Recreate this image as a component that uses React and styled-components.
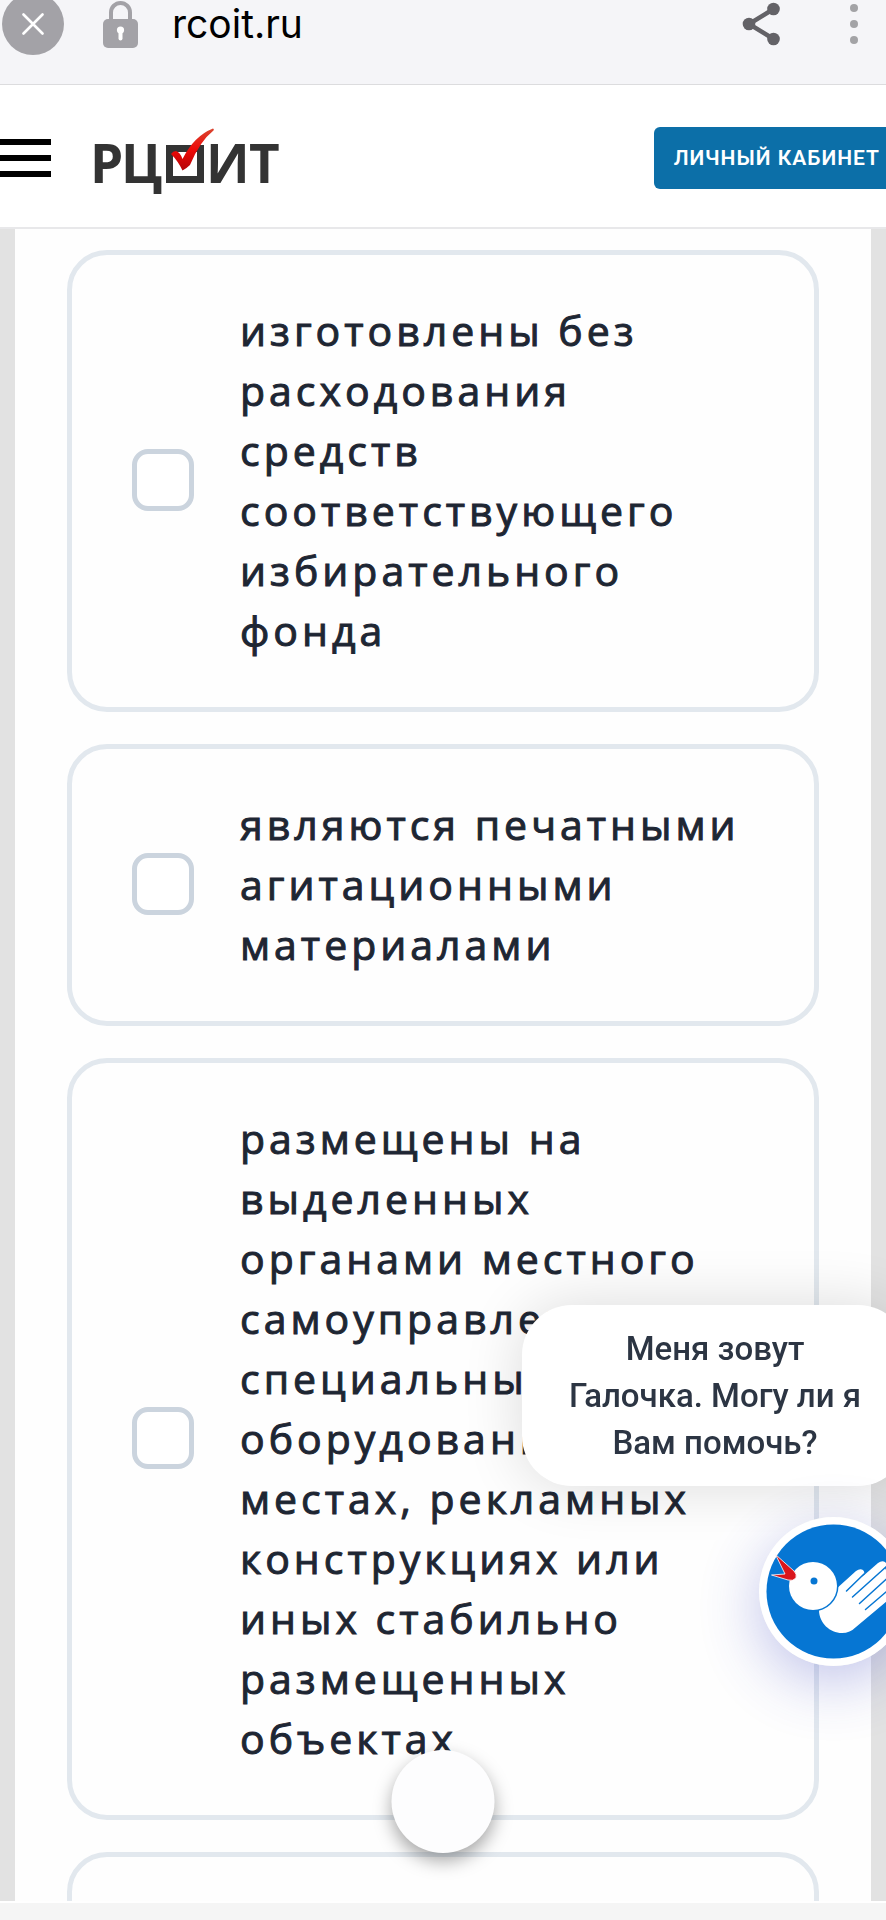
import styled, { createGlobalStyle } from 'styled-components';

const options = [
  'изготовлены без расходования средств соответствующего избирательного фонда',
  'являются печатными агитационными материалами',
  'размещены на выделенных органами местного самоуправления специальных оборудованных местах, рекламных конструкциях или иных стабильно размещенных объектах',
  '',
];

export default function App() {
  return (
    <Page>
      <GlobalStyle />
      <BrowserBar />
      <SiteHeader />
      <Scroller>
        <Panel>
          {options.map((text, idx) => (
            <Option key={idx} text={text} />
          ))}
        </Panel>
      </Scroller>
      <SystemBar />
      <RoundButton type="button" aria-label="Прокрутить" />
      <Assistant>
        <Bubble>Меня зовут Галочка. Могу ли я Вам помочь?</Bubble>
        <BirdButton type="button" aria-label="Галочка">
          <BirdIcon />
        </BirdButton>
      </Assistant>
    </Page>
  );
}

function BrowserBar() {
  return (
    <TopBar>
      <CloseButton type="button" aria-label="Закрыть">
        <svg width="22" height="22" viewBox="0 0 22 22" fill="none" stroke="#fff" strokeWidth="2.6" strokeLinecap="round">
          <path d="M1.5 1.5l19 19M20.5 1.5l-19 19" />
        </svg>
      </CloseButton>
      <svg width="35" height="48" viewBox="0 0 35 48">
        <path d="M8 20V12.500a9.500 9.500 0 0 1 19 0V20" fill="none" stroke="#a3a2a7" strokeWidth="4" />
        <rect y="19" width="35" height="29" rx="5" fill="#a3a2a7" />
        <circle cx="17.500" cy="30" r="3.600" fill="#fff" />
        <path d="M17.500 31v7.500" stroke="#fff" strokeWidth="4" strokeLinecap="round" />
      </svg>
      <Address type="text" aria-label="Адрес" defaultValue="rcoit.ru" />
      <IconButton type="button" aria-label="Поделиться">
        <svg width="38" height="44" viewBox="0 0 38 44" fill="#636267">
          <path d="M31.500 7L7 22l24.500 15" fill="none" stroke="#636267" strokeWidth="4.500" />
          <circle cx="31.500" cy="7" r="6.300" />
          <circle cx="7" cy="22" r="6.300" />
          <circle cx="31.500" cy="37" r="6.300" />
        </svg>
      </IconButton>
      <IconButton type="button" aria-label="Меню браузера">
        <svg width="10" height="44" viewBox="0 0 10 44" fill="#a3a3a6">
          <circle cx="5" cy="6" r="4" />
          <circle cx="5" cy="22" r="4" />
          <circle cx="5" cy="38" r="4" />
        </svg>
      </IconButton>
    </TopBar>
  );
}

function SiteHeader() {
  return (
    <Header>
      <Burger type="button" aria-label="Меню">
        <span />
        <span />
        <span />
      </Burger>
      <Logo href="#" aria-label="РЦОИТ">
        <svg width="196" height="82" viewBox="-6 -6 196 82">
          <defs>
            <linearGradient id="tick" x1="0" y1="0" x2="0" y2="1">
              <stop offset="0" stopColor="#d9452f" />
              <stop offset="0.500" stopColor="#ee0a08" />
              <stop offset="1" stopColor="#b30306" />
            </linearGradient>
          </defs>
          <g fill="#333" fontFamily="'Open Sans', 'Noto Sans', sans-serif" fontSize="53" fontWeight="700">
            <text x="-4" y="60">Р</text>
            <text x="27" y="60">Ц</text>
            <text x="112" y="60">И</text>
            <text x="155" y="60">Т</text>
          </g>
          <rect x="75.500" y="25.500" width="31" height="31" fill="none" stroke="#333" strokeWidth="7" />
          <path
            d="M77 31Q79 28 82 28Q86 29 88.500 36Q100 13 119 5.500Q120.500 6 119.500 7.500Q106 18 96 42Q93 45 88.500 47.500Q84 38 77 31Z"
            fill="url(#tick)"
          />
        </svg>
      </Logo>
      <CabinetButton type="button">Личный кабинет</CabinetButton>
    </Header>
  );
}

function Option({ text }) {
  return (
    <Card>
      <Checkbox type="checkbox" aria-label={text ? undefined : 'Вариант'} />
      <span>{text}</span>
    </Card>
  );
}

function BirdIcon() {
  return (
    <svg width="149" height="149" viewBox="0 0 149 149">
      <circle cx="74.500" cy="74.500" r="74.500" fill="#fff" />
      <circle cx="74.500" cy="74.500" r="67" fill="#0676d3" />
      {/* wing in the shape of a hand */}
      <path
        d="M60 93C60 106 71 116 83 116Q91 116 97 110L134 79V48L127 53L126 51Q129 47 126 45Q123 43 119 46L103 60Q107 56 104 53Q101 51 97 54L76 73Z"
        fill="#fff"
      />
      <path
        d="M87.500 74L105 57M93.500 80L128 49M100.500 86.500L134 56M106.500 92.500L134 69"
        stroke="#0676d3"
        strokeWidth="1.500"
        strokeLinecap="round"
      />
      <circle cx="54" cy="69" r="25.500" fill="#0676d3" />
      <circle cx="54" cy="69" r="24" fill="#fff" />
      <circle cx="55" cy="64" r="3.500" fill="#0676d3" />
      <path
        d="M16.500 37.500L35 54Q38 57 37 61Q34 64.500 29 63L12.500 58L26 57Z"
        fill="#d9151c"
        stroke="#fff"
        strokeWidth="0.800"
      />
    </svg>
  );
}

const GlobalStyle = createGlobalStyle`
  * {
    box-sizing: border-box;
  }

  body {
    margin: 0;
    background: #fff;
    font-family: Roboto, "Noto Sans", sans-serif;
  }

  button {
    border: 0;
    padding: 0;
    font: inherit;
    cursor: pointer;
  }

  svg {
    display: block;
    flex-shrink: 0;
  }
`;

const Page = styled.div`
  position: relative;
  display: flex;
  flex-direction: column;
  height: 100vh;
  overflow: hidden;
`;

const TopBar = styled.div`
  display: flex;
  align-items: center;
  flex-shrink: 0;
  height: 85px;
  padding: 0 27px 37px 2px;
  background: #f5f5f8;
  border-bottom: 1px solid #dcdcde;
`;

const CloseButton = styled.button`
  display: flex;
  align-items: center;
  justify-content: center;
  flex-shrink: 0;
  width: 62px;
  height: 62px;
  margin-right: 39px;
  border-radius: 50%;
  background: #a3a2a7;
`;

const Address = styled.input`
  flex: 1;
  min-width: 0;
  margin-left: 34px;
  padding: 0;
  border: 0;
  outline: none;
  background: transparent;
  color: #000;
  font-family: Inter, sans-serif;
  font-size: 39px;
  line-height: 48px;
`;

const IconButton = styled.button`
  margin-left: 69px;
  background: transparent;
`;

const Header = styled.header`
  display: flex;
  align-items: center;
  flex-shrink: 0;
  height: 144px;
  margin-right: -14px;
  padding-top: 3px;
  background: #fff;
  border-bottom: 2px solid #e8e8ea;
`;

const Burger = styled.button`
  display: flex;
  flex-direction: column;
  gap: 10px;
  width: 51px;
  margin-right: 37px;
  background: transparent;

  span {
    height: 6px;
    background: #000;
  }
`;

const Logo = styled.a`
  margin-right: auto;
`;

const CabinetButton = styled.button`
  height: 62px;
  padding: 0 20px;
  border-radius: 6px;
  background: #0c6fa8;
  color: #fff;
  font-size: 21px;
  font-weight: 600;
  letter-spacing: 1px;
  text-transform: uppercase;
  white-space: nowrap;
`;

const Scroller = styled.main`
  flex: 1;
  min-height: 0;
  padding: 0 15px;
  overflow-y: auto;
  scrollbar-width: none;
  background: #e2e2e2;
`;

const Panel = styled.div`
  display: flex;
  flex-direction: column;
  gap: 32px;
  padding: 21px 52px;
  background: #fefefe;
`;

const Card = styled.label`
  display: flex;
  align-items: center;
  gap: 46px;
  min-height: 162px;
  padding: 45px 60px 47px;
  border: 5px solid #e2e8ee;
  border-radius: 40px;
  color: #1e2633;
  font-family: "Open Sans", "Noto Sans", sans-serif;
  font-size: 41px;
  font-weight: 500;
  line-height: 60px;
  letter-spacing: 4px;
  -webkit-text-stroke: 1px currentColor;
`;

const Checkbox = styled.input`
  appearance: none;
  flex-shrink: 0;
  width: 62px;
  height: 62px;
  margin: 0;
  border: 5px solid #cbd4de;
  border-radius: 16px;
  background: #fff;

  &:checked {
    background: #0c6fa8;
  }
`;

const SystemBar = styled.footer`
  flex-shrink: 0;
  height: 19px;
  border-top: 2px solid #fff;
  background: #f5f5f5;
`;

const RoundButton = styled.button`
  position: absolute;
  bottom: 67px;
  left: 50%;
  width: 103px;
  height: 103px;
  transform: translateX(-50%);
  border-radius: 50%;
  background: #fdfdfe;
  box-shadow: 0 8px 18px rgba(0, 0, 0, 0.35);
`;

const Assistant = styled.aside`
  position: absolute;
  right: -22px;
  bottom: 254px;
  display: flex;
  flex-direction: column;
  align-items: flex-end;
  gap: 31px;
`;

const Bubble = styled.p`
  width: 386px;
  margin: 0;
  padding: 20px 40px;
  border-radius: 50px;
  background: #fff;
  box-shadow: 0 0 60px rgba(0, 0, 0, 0.14);
  color: #2c3543;
  font-size: 33px;
  font-weight: 500;
  line-height: 47px;
  text-align: center;
`;

const BirdButton = styled.button`
  border-radius: 50%;
  box-shadow: 0 16px 60px rgba(50, 60, 190, 0.3);
`;
